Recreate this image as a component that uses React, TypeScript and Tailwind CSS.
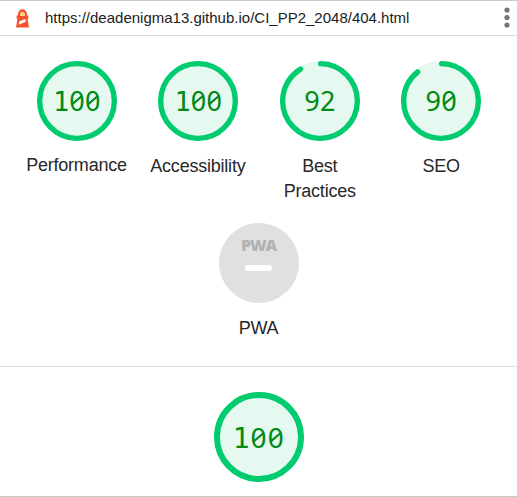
type GaugeProps = { score: number; large?: boolean };

// A monospaced digit; zeros carry a diagonal slash.
function Digit({ d, large }: { d: string; large?: boolean }) {
  const cell = large ? "w-[17.4px]" : "w-[15.8px]";
  const one = large ? "font-['DejaVu_Sans_Mono'] text-[28px]" : "font-['DejaVu_Sans_Mono'] text-[27px]";
  const other = large ? "font-['Noto_Sans'] text-[28px]" : "font-['Noto_Sans'] text-[27px]";
  return (
    <span className={`relative flex justify-center leading-none ${cell} ${d === "1" ? one : other}`}>
      {d}
      {d === "0" && (
        <svg
          viewBox="0 0 16 20"
          className={`absolute left-0 h-5 w-full ${large ? "top-[4px]" : "top-[3px]"}`}
          fill="none"
          stroke="#018a16"
          strokeWidth="2.1"
        >
          <path d="M3 14.4 13 6" />
        </svg>
      )}
    </span>
  );
}

function Gauge({ score, large }: GaugeProps) {
  const c = 2 * Math.PI * 56;
  const arc = score === 100 ? c : (score / 100) * c - 4;
  return (
    <div className={`relative ${large ? "h-[90px] w-[90px]" : "h-20 w-20"}`}>
      <svg viewBox="0 0 120 120" className="block h-full w-full">
        <circle cx="60" cy="60" r="60" fill="#e6f9f0" />
        <circle
          cx="60"
          cy="60"
          r="56"
          fill="none"
          stroke="#00cc6f"
          strokeWidth="8"
          strokeLinecap="round"
          strokeDasharray={`${arc} ${c}`}
          transform="rotate(-89 60 60)"
        />
      </svg>
      <span className={`absolute inset-x-0 top-0 flex items-baseline justify-center text-[#018a16] ${large ? "pt-[31px]" : "pt-[26px]"}`}>
        {String(score)
          .split("")
          .map((d, i) => (
            <Digit key={i} d={d} large={large} />
          ))}
      </span>
    </div>
  );
}

const categories = [
  { title: "Performance", score: 100, label: "-ml-px pt-3" },
  { title: "Accessibility", score: 100, label: "-ml-px pt-[13px]" },
  { title: "Best Practices", score: 92, label: "pt-[13px]" },
  { title: "SEO", score: 90, label: "pt-[13px]" },
];

export default function App() {
  return (
    <div className="flex h-[497px] w-[517px] flex-col overflow-hidden border-t border-b border-t-[#c8cacd] border-b-[#c8c8c8] bg-white font-['Liberation_Sans',Arial,sans-serif] text-[#212121]">
      <header className="flex h-[35px] shrink-0 items-center border-b border-[#dcdcdc] pr-[7px] pl-4">
        <svg width="13" height="19" viewBox="0 0 13 19" className="shrink-0">
          <path d="M2 5.2C2 2.2 4 .2 6.5.2S11 2.2 11 5.2V6.5h1.4v3h-.9L13 18.6H0L1.5 9.5H.6v-3H2z" fill="#f4502e" />
          <path d="M4 7V5.2C4 3.8 5 2.8 6.5 2.8S9 3.8 9 5.2V7z" fill="#fbd37a" />
          <path d="m3.3 12.2 6-2.3.5 2.8-7.1 3z" fill="#fff" />
        </svg>
        <span className="ml-4 text-[15px] leading-5">https://deadenigma13.github.io/CI_PP2_2048/404.html</span>
        <svg width="6" height="22" viewBox="0 0 6 22" className="ml-auto shrink-0" fill="#757575">
          <circle cx="3" cy="3" r="2.6" />
          <circle cx="3" cy="10.5" r="2.6" />
          <circle cx="3" cy="18" r="2.6" />
        </svg>
      </header>
      <section className="flex h-[331px] shrink-0 flex-col border-b border-[#e0e0e0] pt-[25px]">
        <div className="grid grid-cols-[121.4px_121.4px_121.4px_121.4px] pl-[16.3px]">
          {categories.map((c) => (
            <div key={c.title} className="flex h-[162px] flex-col items-center">
              <Gauge score={c.score} />
              <div className={`w-[110px] text-center text-[18px] leading-[25px] tracking-[-0.22px] text-[#282828] ${c.label}`}>{c.title}</div>
            </div>
          ))}
        </div>
        <div className="flex flex-col items-center">
          <div className="flex h-20 w-20 flex-col items-center rounded-full bg-[#e0e0e0] pt-[14px]">
            <div className="flex h-[15px] items-center font-['Open_Sans',sans-serif] text-[16px] leading-none font-extrabold tracking-[-1.2px] text-[#b2b2b2]">
              PWA
            </div>
            <div className="mt-[13px] h-[6px] w-[27px] rounded-full bg-white" />
          </div>
          <div className="pt-[13px] text-[18px] leading-[25px] tracking-[-0.25px] text-[#282828]">PWA</div>
        </div>
      </section>
      <section className="flex justify-center pt-[25px]">
        <Gauge score={100} large />
      </section>
    </div>
  );
}
